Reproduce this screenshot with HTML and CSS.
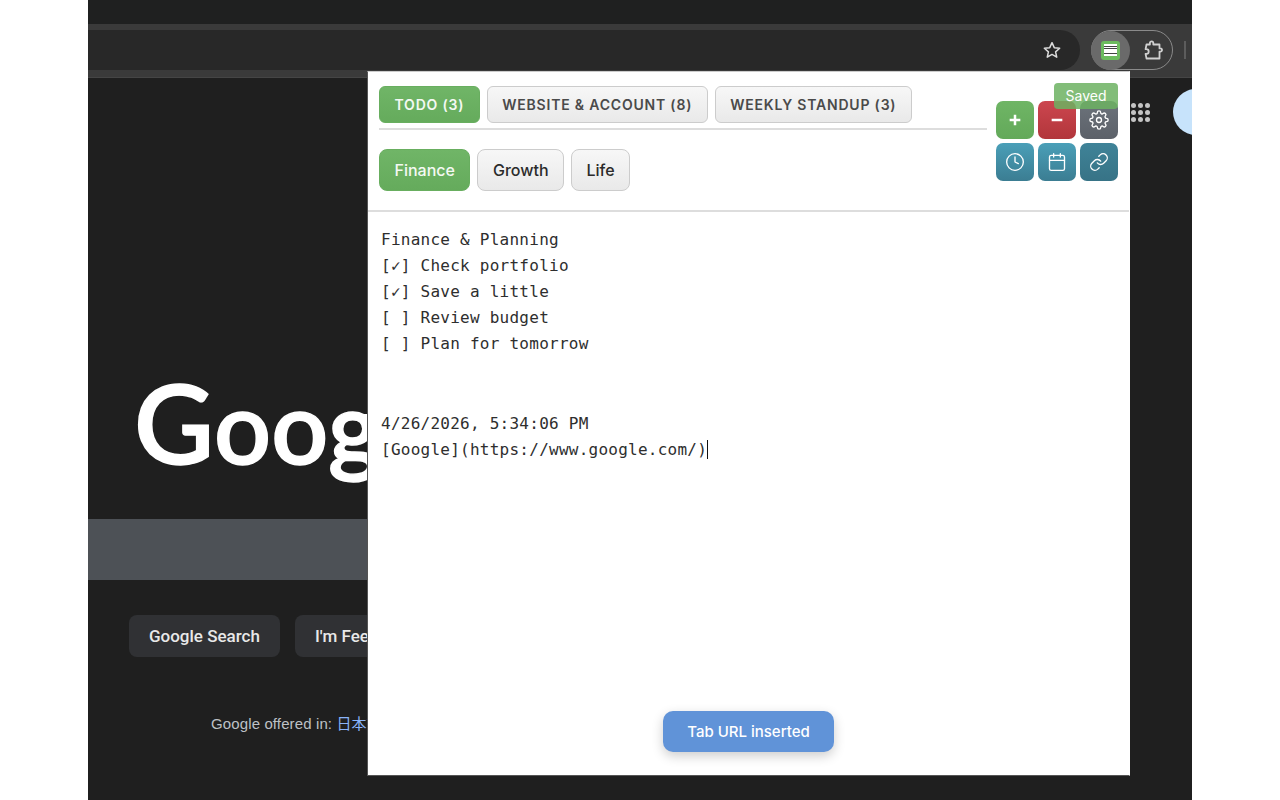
FILE: index.html
```html
<!DOCTYPE html>
<html lang="en">
<head>
<meta charset="utf-8">
<title>Notes popup</title>
<link rel="stylesheet" href="styles.css">
</head>
<body>
<main class="stage">
  <div class="tabstrip"></div>
  <header class="toolbar">
    <div class="omnibox">
      <svg class="star" viewBox="0 0 24 24"><polygon points="12,3.2 14.7,9.2 21.2,9.9 16.3,14.2 17.7,20.6 12,17.3 6.3,20.6 7.7,14.2 2.8,9.9 9.3,9.2"/></svg>
    </div>
    <div class="ext-pill">
      <div class="ext-active">
        <div class="ext-logo"><div class="ext-sheet"></div></div>
      </div>
      <svg class="puzzle" viewBox="0 0 24 24"><path d="M5.5 6.5h3.4V5a1.7 1.7 0 0 1 3.4 0v1.5h6.2v3.9h.9a1.6 1.6 0 0 1 0 3.2h-.9v6.9H5.5v-.1l-.9-4.4h.7a2.4 2.4 0 0 0 0-4.8h-.7z"/></svg>
    </div>
    <div class="tb-sep"></div>
  </header>

  <section class="google">
    <div class="apps">
      <i></i><i></i><i></i><i></i><i></i><i></i><i></i><i></i><i></i>
    </div>
    <div class="avatar"></div>
    <div class="logo"><span class="logo-cap">G</span>oogle</div>
    <div class="searchbar"></div>
    <div class="g-buttons">
      <button class="g-btn">Google Search</button>
      <button class="g-btn">I'm Feeling Lucky</button>
    </div>
    <p class="offered">Google offered in: <a class="lang">日本語</a></p>
  </section>

  <section class="popup">
    <div class="pop-head">
      <div class="pop-tabs">
        <nav class="tabs">
          <button class="tab active">TODO (3)</button>
          <button class="tab">WEBSITE &amp; ACCOUNT (8)</button>
          <button class="tab">WEEKLY STANDUP (3)</button>
        </nav>
        <nav class="subtabs">
          <button class="sub active">Finance</button>
          <button class="sub">Growth</button>
          <button class="sub">Life</button>
        </nav>
      </div>
      <div class="actions">
        <button class="act green"><svg viewBox="0 0 24 24"><path class="bold" d="M12 5.6v12.8M5.6 12h12.8"/></svg></button>
        <button class="act red"><svg viewBox="0 0 24 24"><path class="bold" d="M5.6 12h12.8"/></svg></button>
        <button class="act gray"><svg viewBox="0 0 24 24"><circle cx="12" cy="12" r="3"/><path d="M19.4 15a1.65 1.65 0 0 0 .33 1.82l.06.06a2 2 0 0 1-2.83 2.83l-.06-.06a1.65 1.65 0 0 0-1.82-.33 1.65 1.65 0 0 0-1 1.51V21a2 2 0 0 1-4 0v-.09A1.65 1.65 0 0 0 9 19.4a1.65 1.65 0 0 0-1.82.33l-.06.06a2 2 0 0 1-2.83-2.83l.06-.06a1.65 1.65 0 0 0 .33-1.82 1.65 1.65 0 0 0-1.51-1H3a2 2 0 0 1 0-4h.09A1.65 1.65 0 0 0 4.6 9a1.65 1.65 0 0 0-.33-1.82l-.06-.06a2 2 0 0 1 2.83-2.83l.06.06a1.65 1.65 0 0 0 1.82.33H9a1.65 1.65 0 0 0 1-1.51V3a2 2 0 0 1 4 0v.09a1.65 1.65 0 0 0 1 1.51 1.65 1.65 0 0 0 1.82-.33l.06-.06a2 2 0 0 1 2.83 2.83l-.06.06a1.65 1.65 0 0 0-.33 1.82V9a1.65 1.65 0 0 0 1.51 1H21a2 2 0 0 1 0 4h-.09a1.65 1.65 0 0 0-1.51 1z"/></svg></button>
        <button class="act teal"><svg viewBox="0 0 24 24"><circle cx="12" cy="12" r="10"/><path d="M12 6v6l4 2"/></svg></button>
        <button class="act teal"><svg viewBox="0 0 24 24"><rect x="3" y="4" width="18" height="18" rx="2"/><path d="M16 2v4M8 2v4M3 10h18"/></svg></button>
        <button class="act deep"><svg viewBox="0 0 24 24"><path d="M10 13a5 5 0 0 0 7.54.54l3-3a5 5 0 0 0-7.07-7.07l-1.72 1.71"/><path d="M14 11a5 5 0 0 0-7.54-.54l-3 3a5 5 0 0 0 7.07 7.07l1.71-1.71"/></svg></button>
      </div>
      <div class="saved">Saved</div>
    </div>
    <div class="note">
      <div class="note-block">Finance &amp; Planning
[✓] Check portfolio
[✓] Save a little
[ ] Review budget
[ ] Plan for tomorrow


</div>
      <div class="note-block note-last">4/26/2026, 5:34:06 PM
[Google](https://www.google.com/)<span class="caret"></span></div>
    </div>
    <div class="toast">Tab URL inserted</div>
  </section>
</main>
</body>
</html>
```
FILE: styles.css
```css
* { box-sizing: border-box; }
html, body { margin: 0; height: 100%; background: #fff; overflow: hidden; }
body { display: flex; justify-content: center; font-family: Inter, "Noto Sans", sans-serif; }
button { font-family: inherit; cursor: pointer; }

.stage { position: relative; width: 1104px; height: 800px; background: #1f1f1f; overflow: hidden; display: flex; flex-direction: column; }
.tabstrip { height: 24px; background: #1f2020; flex: none; }
.toolbar { height: 54px; flex: none; background: #3a3a3a; border-bottom: 1px solid #454545; display: flex; align-items: flex-start; padding-top: 6px; }
.omnibox { width: 992px; height: 40px; background: #282828; border-radius: 0 20px 20px 0; display: flex; align-items: center; justify-content: flex-end; padding-right: 18px; }
.star { width: 20px; height: 20px; fill: none; stroke: #dcdcdc; stroke-width: 1.8; stroke-linejoin: round; }
.ext-pill { width: 82px; height: 40px; margin-left: 11px; border: 1px solid #8a8a8a; border-radius: 20px; display: flex; align-items: center; justify-content: space-between; padding-right: 7px; }
.ext-active { width: 39px; height: 39px; border-radius: 50%; background: #6a6a6a; display: flex; align-items: center; justify-content: center; margin-left: -1px; }
.ext-logo { width: 19px; height: 19px; background: #6cbb5e; border-radius: 3px; display: flex; align-items: center; justify-content: center; }
.ext-sheet { width: 13px; height: 12px; background: repeating-linear-gradient(#fff 0 1.5px, #444 1.5px 2.5px); }
.puzzle { width: 24px; height: 24px; fill: none; stroke: #d0d0d0; stroke-width: 1.8; stroke-linejoin: round; }
.tb-sep { width: 2px; height: 18px; background: #5c5c5c; margin: 11px 0 0 11px; }

.google { flex: 1; display: flex; flex-direction: column; align-items: flex-start; background: #1f1f1f; }
.apps { position: absolute; left: 1043px; top: 103px; display: grid; grid-template-columns: repeat(3, 5px); gap: 2px; }
.apps i { width: 5px; height: 5px; border-radius: 50%; background: #c4c4c4; }
.avatar { position: absolute; left: 1085px; top: 89px; width: 46px; height: 46px; border-radius: 50%; background: #c7e3fb; }
.logo { margin: 0 0 0 46px; width: 233px; overflow: hidden; padding-top: 275px; height: 441px; font-family: Lato, sans-serif; font-weight: 600; font-size: 100px; line-height: 136px; color: #fff; white-space: nowrap; -webkit-text-stroke: 1.4px #fff; }
.logo-cap { font-size: 110px; }
.searchbar { width: 900px; height: 61px; background: #4d5156; }
.g-buttons { display: flex; gap: 15px; margin: 35px 0 0 41px; }
.g-btn { height: 42px; padding: 0 20px; background: #303134; border: 0; border-radius: 8px; color: #e8e8e8; font-size: 17px; font-weight: 500; white-space: nowrap; font-family: Roboto, sans-serif; }
.offered { margin: 57px 0 0 123px; color: #bdc1c6; font-family: "Liberation Sans", sans-serif; font-size: 15px; letter-spacing: .12px; line-height: 18px; white-space: nowrap; }
.lang { color: #8ab4f8; font-family: "Noto Sans CJK JP", sans-serif; }

.popup { position: absolute; left: 279px; top: 71px; width: 763px; height: 705px; background: #fff; border: 1px solid #555; border-top-color: #ccc; border-right-color: #fff; display: flex; flex-direction: column; }
.pop-head { position: relative; height: 140px; flex: none; border-bottom: 2px solid #ddd; padding: 14px 11px 0 11px; display: flex; justify-content: space-between; align-items: flex-start; }
.pop-tabs { width: 608px; }
.tabs { display: flex; gap: 7px; padding-bottom: 5px; border-bottom: 2px solid #ddd; }
.tab { height: 37px; padding: 0 14.5px; border: 1px solid #ccc; border-radius: 6px; background: linear-gradient(#f7f7f7, #e9e9e9); color: #4a4a4a; font-size: 14px; font-weight: 600; letter-spacing: .8px; white-space: nowrap; }
.tab.active, .sub.active { background: linear-gradient(#70b567, #65ab5c); border-color: #68ae5f; color: #f4f9f3; }
.subtabs { display: flex; gap: 7px; margin-top: 19px; }
.sub { height: 42px; padding: 0 14.5px; border: 1px solid #ccc; border-radius: 8px; background: linear-gradient(#f7f7f7, #e9e9e9); color: #2b2b2b; font-size: 16px; font-weight: 500; }
.actions { display: grid; grid-template-columns: repeat(3, 38px); grid-auto-rows: 38px; gap: 4px; margin-top: 15px; }
.act { padding: 0; border: 0; border-radius: 7px; display: flex; align-items: center; justify-content: center; }
.act svg { width: 20px; height: 20px; fill: none; stroke: #fff; stroke-width: 1.6; stroke-linecap: round; stroke-linejoin: round; }
.act .bold { stroke-width: 3; stroke-linecap: butt; }
.green { background: linear-gradient(#6fb565, #63a95a); }
.red { background: linear-gradient(#cc464f, #b2363b); }
.gray { background: linear-gradient(#6c737b, #5c6169); }
.teal { background: linear-gradient(#4a9fb8, #3b7d92); }
.deep { background: linear-gradient(#3f8398, #377386); }
.saved { position: absolute; right: 11px; top: 11px; width: 64px; height: 26px; background: rgba(108, 178, 98, .85); color: #fff; border-radius: 4px; font-size: 14px; line-height: 26px; text-align: center; }
.note { flex: 1; padding: 15px 13px; font-family: "DejaVu Sans Mono", monospace; font-size: 16px; letter-spacing: .25px; line-height: 26px; color: #2e2e2e; }
.note-block { white-space: pre; }
.note-last { margin-top: 2px; }
.caret { display: inline-block; width: 1px; height: 19px; background: #111; vertical-align: -4px; }
.toast { position: absolute; left: 295px; top: 639px; width: 171px; height: 41px; background: #6093d8; color: #fff; border-radius: 10px; font-size: 15px; font-weight: 500; line-height: 41px; text-align: center; box-shadow: 0 4px 12px rgba(0, 0, 0, .2); }
```
